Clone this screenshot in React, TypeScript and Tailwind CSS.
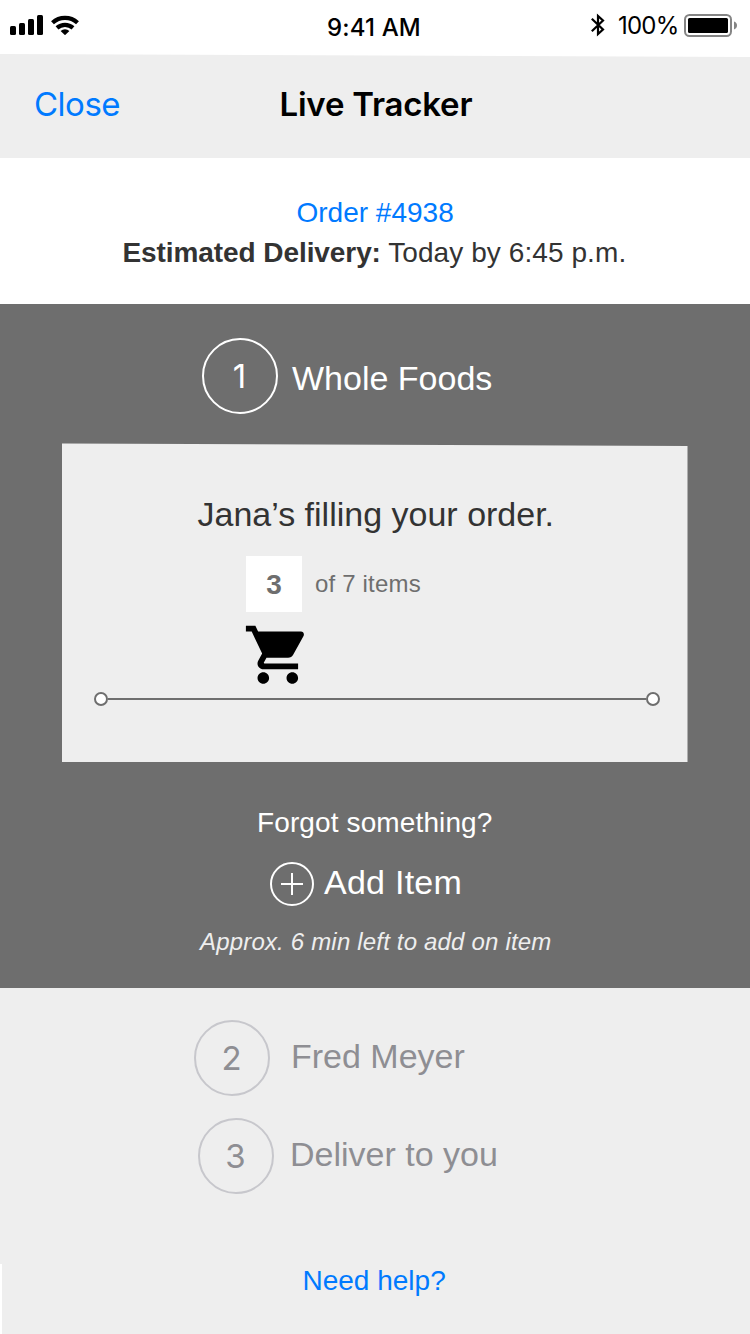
import type { ReactNode } from "react";

function SignalIcon() {
  return (
    <svg width="34" height="20" viewBox="0 0 34 20" className="block shrink-0">
      <rect x="0" y="11" width="6" height="9" rx="1.5" />
      <rect x="9" y="8" width="6" height="12" rx="1.5" />
      <rect x="18" y="4" width="6" height="16" rx="1.5" />
      <rect x="27" y="0" width="6" height="20" rx="1.5" />
    </svg>
  );
}

function WifiIcon() {
  return (
    <svg width="28" height="20" viewBox="0 0 28 20" className="block shrink-0">
      <g fill="none" stroke="#000" strokeWidth="4.2">
        <path d="M1.5 7.8a18.4 18.4 0 0 1 25 0" />
        <path d="M6 12.9a12 12 0 0 1 16 0" />
      </g>
      <path d="M9.6 16a6.6 6.6 0 0 1 8.8 0L14 20.200z" />
    </svg>
  );
}

function BluetoothIcon() {
  return (
    <svg width="14" height="24" viewBox="0 0 14 24" className="block shrink-0">
      <path d="M0.8 5.7L12 16.5L7 21.1V2.9L12 7.5L0.8 18.2" fill="none" stroke="#000" strokeWidth="2.2" />
    </svg>
  );
}

function BatteryIcon() {
  return (
    <svg width="54" height="24" viewBox="0 0 54 24" className="block shrink-0">
      <rect x="1" y="1" width="46" height="21" rx="4.5" fill="none" stroke="#858585" strokeWidth="2" />
      <rect x="4" y="4" width="40" height="15" rx="1.5" />
      <path d="M50 7.6c1.8.6 3 2 3 3.9s-1.2 3.3-3 3.9z" fill="#858585" />
    </svg>
  );
}

function CartIcon() {
  return (
    <svg width="69.6" height="69.6" viewBox="0 0 24 24" className="block">
      <path d="M7 18c-1.1 0-1.99.9-1.99 2S5.9 22 7 22s2-.9 2-2-.9-2-2-2zM1 2v2h2l3.6 7.59-1.35 2.45c-.16.28-.25.61-.25.96 0 1.1.9 2 2 2h12v-2H7.42c-.14 0-.25-.11-.25-.25l.03-.12.9-1.63h7.45c.75 0 1.41-.41 1.75-1.03l3.58-6.49c.08-.14.12-.31.12-.48 0-.55-.45-1-1-1H5.21l-.94-2H1zm16 16c-1.1 0-1.99.9-1.99 2s.89 2 1.99 2 2-.9 2-2-.9-2-2-2z" />
    </svg>
  );
}

function StepCircle({ className, children }: { className: string; children: ReactNode }) {
  return (
    <span
      className={`flex h-[76px] w-[76px] shrink-0 items-start justify-center rounded-full border-2 pt-4 pr-px font-['Inter',sans-serif] text-[33px] leading-[40px] ${className}`}
    >
      {children}
    </span>
  );
}

export default function App() {
  return (
    <div className="flex h-[1334px] w-[750px] flex-col overflow-hidden bg-white font-['Liberation_Sans',sans-serif] whitespace-nowrap">
      <div className="grid h-[54px] shrink-0 grid-cols-3 items-start font-['Inter',sans-serif] text-[24px] leading-[28px] text-black">
        <div className="flex gap-[7px] pt-[15px] pl-[10px]">
          <SignalIcon />
          <WifiIcon />
        </div>
        <div className="pt-[14px] pl-[77px] font-medium tracking-[0.15px]">9:41 AM</div>
        <div className="flex items-start pl-[91px]">
          <div className="pt-[13px]">
            <BluetoothIcon />
          </div>
          <div className="w-[66px] pt-[12px] pl-[13px] tracking-[-0.8px]">100%</div>
          <div className="pt-[14px] pl-[13px]">
            <BatteryIcon />
          </div>
        </div>
      </div>

      <header className="grid h-[104px] shrink-0 grid-cols-3 bg-[#eeeeee] pt-[30px] font-['Inter',sans-serif] text-[33px] leading-[40px] [clip-path:polygon(0_0,100%_3px,100%_100%,0_100%)]">
        <a className="pl-[34px] tracking-[-0.5px] text-[#007aff]">Close</a>
        <h1 className="pl-[29.500px] font-semibold tracking-[-0.22px] text-black">Live Tracker</h1>
      </header>

      <section className="h-[146px] shrink-0 pt-[35px] text-[28px] leading-[40px] text-[#333333]">
        <div className="pl-[296.5px] text-[#007aff]">Order #4938</div>
        <div className="pl-[122.5px]">
          <b className="tracking-[-0.08px]">Estimated Delivery:</b>
          <span className="tracking-[0.08px]"> Today by 6:45 p.m.</span>
        </div>
      </section>

      <main className="h-[684px] shrink-0 bg-[#6e6e6e] text-white">
        <div className="flex pt-[34px] pl-[202px]">
          <StepCircle className="border-white">1</StepCircle>
          <h2 className="pt-[20px] pl-[14px] text-[34px] leading-[40px]">Whole Foods</h2>
        </div>

        <div className="mt-[29px] ml-[62px] h-[319px] w-[625.5px] bg-[#eeeeee] pt-[51px] text-[#333333] [clip-path:polygon(0_0.5px,100%_3px,100%_100%,0_100%)]">
          <p className="pl-[135.5px] text-[34px] leading-[40px]">Jana’s filling your order.</p>
          <div className="mt-[22px] flex pl-[184px] text-[#6e6e6e]">
            <div className="h-[56px] w-[56px] bg-white pt-[13px] text-center text-[28px] leading-[32px] font-bold">3</div>
            <div className="pt-[14px] pl-[13px] text-[24px] leading-[28px] tracking-[0.18px]">of 7 items</div>
          </div>
          <div className="mt-[8px] ml-[181px] h-[70px]">
            <CartIcon />
          </div>
          <div className="mt-[2px] ml-[32px] flex w-[566px] items-center">
            <span className="h-[14px] w-[14px] rounded-full border-2 border-[#6e6e6e] bg-white" />
            <span className="h-[2px] flex-1 bg-[#6e6e6e]" />
            <span className="h-[14px] w-[14px] rounded-full border-2 border-[#6e6e6e] bg-white" />
          </div>
        </div>

        <p className="mt-[45px] pl-[257px] text-[28px] leading-[32px] tracking-[0.12px]">Forgot something?</p>
        <button className="mt-[23px] flex pl-[270px] text-[34px] leading-[40px]">
          <svg width="44" height="44" viewBox="0 0 44 44" fill="none" stroke="#fff" strokeWidth="2" className="block">
            <circle cx="22" cy="22" r="21" />
            <path d="M11 22h22M22 11v22" />
          </svg>
          <span className="pl-[10px] tracking-[0.25px]">Add Item</span>
        </button>
        <p className="mt-[22px] pl-[200px] text-[24px] leading-[28px] tracking-[0.18px] text-[#eeeeee] italic">
          Approx. 6 min left to add on item
        </p>
      </main>

      <div className="flex h-[276px] shrink-0 flex-col gap-[22px] bg-[#eeeeee] pt-[32px] text-[34px] leading-[40px] text-[#8e8e93]">
        <div className="flex pl-[194px]">
          <StepCircle className="border-[#c7c7cc]">2</StepCircle>
          <h2 className="pt-[16px] pl-[21px]">Fred Meyer</h2>
        </div>
        <div className="flex pl-[198px]">
          <StepCircle className="border-[#c7c7cc]">3</StepCircle>
          <h2 className="pt-[16px] pl-[16px]">Deliver to you</h2>
        </div>
      </div>

      <footer className="ml-[2px] h-[70px] shrink-0 bg-[#eeeeee] pt-px text-[28px] leading-[32px]">
        <a className="block pl-[300.5px] text-[#007aff]">Need help?</a>
      </footer>
    </div>
  );
}
